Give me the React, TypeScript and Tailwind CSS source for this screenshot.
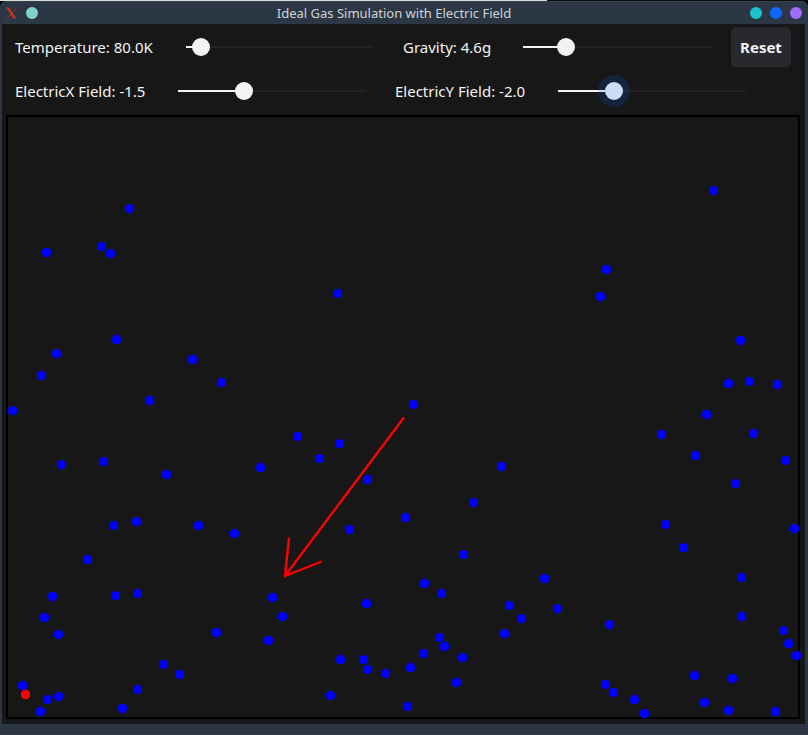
import { useId, useState } from "react";
import type { CSSProperties } from "react";

type Point = [number, number];

const particles: Point[] = [
  [129, 208], [101, 246], [110, 253], [46, 252], [116, 339], [56, 353], [192, 359], [41, 375],
  [221, 382], [12, 410], [149, 400], [61, 464], [103, 461], [166, 474], [260, 467], [113, 525],
  [136, 521], [198, 525], [234, 533], [87, 559], [52, 596], [115, 595], [137, 593], [44, 617],
  [58, 634], [216, 632], [163, 664], [179, 674], [22, 685], [137, 689], [58, 696], [47, 699],
  [40, 711], [122, 708], [272, 597], [282, 616], [268, 640], [337, 293], [413, 404], [297, 436],
  [339, 443], [319, 458], [501, 466], [367, 479], [405, 517], [349, 529], [473, 502], [463, 554],
  [424, 583], [441, 593], [366, 603], [509, 605], [521, 618], [504, 633], [439, 637], [444, 646],
  [423, 653], [462, 657], [340, 659], [363, 659], [367, 669], [410, 667], [385, 673], [456, 682],
  [330, 695], [407, 706], [713, 190], [606, 269], [600, 296], [740, 340], [728, 383], [749, 381],
  [777, 384], [706, 414], [661, 434], [753, 433], [695, 455], [785, 460], [735, 483], [665, 524],
  [794, 528], [683, 547], [544, 578], [741, 577], [557, 608], [741, 616], [609, 624], [783, 630],
  [788, 643], [796, 655], [694, 675], [732, 678], [605, 684], [613, 692], [634, 699], [704, 702],
  [644, 713], [728, 710], [775, 711],
];

const tracer: Point = [25, 694];

interface FieldSliderProps {
  name: string;
  unit?: string;
  min: number;
  max: number;
  step: number;
  value: number;
  active?: boolean;
  onChange: (value: number) => void;
}

function FieldSlider({ name, unit = "", min, max, step, value, active, onChange }: FieldSliderProps) {
  const id = useId();
  const fill = { "--fill": `${((value - min) / (max - min)) * 100}%` } as CSSProperties;
  return (
    <>
      <label htmlFor={id} className="whitespace-nowrap">
        {name}: {value.toFixed(1)}
        {unit}
      </label>
      <input
        id={id}
        type="range"
        min={min}
        max={max}
        step={step}
        value={value}
        style={fill}
        onChange={(e) => onChange(Number(e.target.value))}
        className={`h-8 w-full min-w-0 appearance-none bg-[linear-gradient(to_right,#f3f3f3_var(--fill),#222222_var(--fill))] bg-[length:calc(100%-18px)_2px] bg-center bg-no-repeat outline-none [&::-webkit-slider-thumb]:size-[18px] [&::-webkit-slider-thumb]:appearance-none [&::-webkit-slider-thumb]:rounded-full ${
          active
            ? "[&::-webkit-slider-thumb]:bg-[#ccddf5] [&::-webkit-slider-thumb]:shadow-[0_0_0_7px_rgba(0,108,255,0.16)]"
            : "[&::-webkit-slider-thumb]:bg-[#f3f3f3]"
        }`}
      />
    </>
  );
}

function TitleBar() {
  return (
    <header>
      <div className="h-px bg-[linear-gradient(to_right,#d9dcd8_547px,#0b0b0c_547px)]" />
      <div className="flex h-[23px] items-center justify-between rounded-t-md border-t border-[#34404a] bg-[#2c3745] px-1.5">
        <div className="flex items-center gap-2">
          <svg viewBox="0 0 12 12" className="size-3" aria-hidden="true">
            <path d="M0.300 0.500h2.600l7.300 11h-2.600z" fill="#e0301e" />
            <path d="M11 0.500L6.600 5.400M5.200 7L0.800 11.500" stroke="#b3302a" strokeWidth="1" />
          </svg>
          <button type="button" aria-label="Window menu" className="size-3 rounded-full bg-[#7fd3cb]" />
        </div>
        <h1 className="text-[13px] leading-5 text-[#d0d3d6]">Ideal Gas Simulation with Electric Field</h1>
        <div className="flex gap-2">
          <button type="button" aria-label="Minimize" className="size-3 rounded-full bg-[#1dc1cd]" />
          <button type="button" aria-label="Maximize" className="size-3 rounded-full bg-[#0d66ff]" />
          <button type="button" aria-label="Close" className="size-3 rounded-full bg-[#a26dff]" />
        </div>
      </div>
    </header>
  );
}

function Chamber() {
  return (
    <div className="mr-[5px] ml-1 border-2 border-black">
      <svg
        viewBox="8 117 790 600"
        className="block w-full overflow-visible"
        role="img"
        aria-label="Gas particles and field direction"
      >
        <g fill="#0000ff" shapeRendering="crispEdges">
          {particles.map(([x, y]) => (
            <circle key={`${x}-${y}`} cx={x + 0.5} cy={y + 0.5} r="4.8" />
          ))}
          <circle cx={tracer[0] + 0.5} cy={tracer[1] + 0.5} r="4.8" fill="#ff0000" />
        </g>
        <path
          d="M404 417.500L285 576M289 537.500L285 576L321.500 561.500"
          fill="none"
          stroke="#ff0000"
          strokeWidth="2.4"
        />
      </svg>
    </div>
  );
}

export default function App() {
  const [temperature, setTemperature] = useState(80);
  const [gravity, setGravity] = useState(4.6);
  const [fieldX, setFieldX] = useState(-1.5);
  const [fieldY, setFieldY] = useState(-2);

  const reset = () => {
    setTemperature(80);
    setGravity(4.6);
    setFieldX(-1.5);
    setFieldY(-2);
  };

  return (
    <div className="flex min-h-screen flex-col border-b border-[#3a4048] bg-black font-['Noto_Sans',sans-serif]">
      <TitleBar />
      <div className="flex flex-1 flex-col border-r-[3px] border-b-[10px] border-l-2 border-[#2c3745] bg-[#171717]">
        <div className="flex flex-col gap-1 pt-[3px] pr-3.5 pb-1 pl-[13px] text-[15px] leading-5 text-[#f3f3f3]">
          <div className="flex h-10 items-center gap-[11px]">
            <div className="grid min-w-0 flex-1 grid-cols-[142px_1fr_91px_1fr] items-center gap-5">
              <FieldSlider name="Temperature" unit="K" min={0} max={1000} step={1} value={temperature} onChange={setTemperature} />
              <FieldSlider name="Gravity" unit="g" min={0} max={20} step={0.1} value={gravity} onChange={setGravity} />
            </div>
            <button type="button" onClick={reset} className="h-10 w-[60px] rounded-[5px] bg-[#28292e] font-bold">
              Reset
            </button>
          </div>
          <div className="grid h-10 grid-cols-[134px_1fr_134px_1fr] items-center gap-5 pr-9">
            <FieldSlider name="ElectricX Field" min={-5} max={5} step={0.1} value={fieldX} onChange={setFieldX} />
            <FieldSlider name="ElectricY Field" min={-5} max={5} step={0.1} value={fieldY} active onChange={setFieldY} />
          </div>
        </div>
        <Chamber />
      </div>
    </div>
  );
}
